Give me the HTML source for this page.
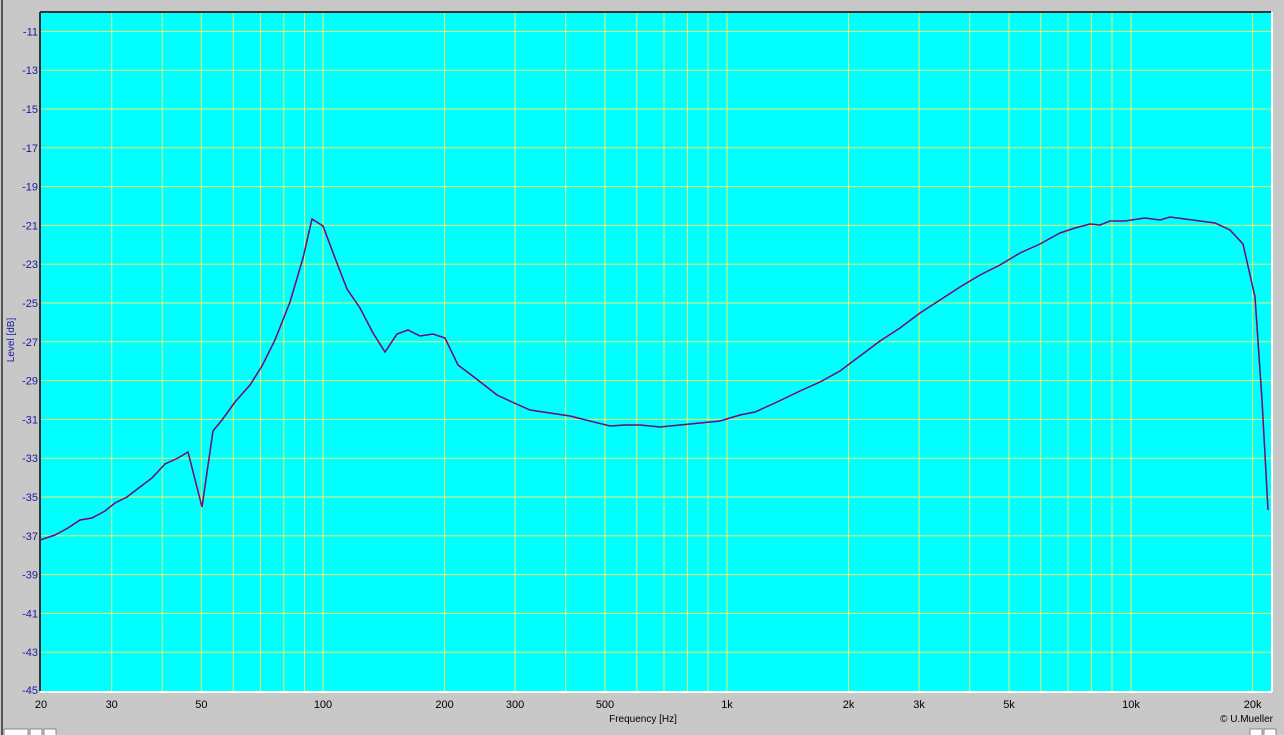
<!DOCTYPE html>
<html><head><meta charset="utf-8"><style>
html,body{margin:0;padding:0;background:#c8c8c8;width:1284px;height:735px;overflow:hidden}
svg text{font-family:"Liberation Sans",Arial,sans-serif}
</style></head><body>
<svg width="1284" height="735" xmlns="http://www.w3.org/2000/svg">
<rect width="1284" height="735" fill="#c8c8c8"/>
<line x1="2" y1="0" x2="2" y2="735" stroke="#555" stroke-width="2"/>
<rect x="40" y="12" width="1231" height="679" fill="#00ffff"/>
<g stroke="#e4f070" stroke-width="1">
<line x1="111.7" y1="12" x2="111.7" y2="691"/><line x1="162.2" y1="12" x2="162.2" y2="691"/>
<line x1="201.4" y1="12" x2="201.4" y2="691"/><line x1="233.3" y1="12" x2="233.3" y2="691"/>
<line x1="260.4" y1="12" x2="260.4" y2="691"/><line x1="283.8" y1="12" x2="283.8" y2="691"/>
<line x1="304.5" y1="12" x2="304.5" y2="691"/><line x1="323" y1="12" x2="323" y2="691"/>
<line x1="444.6" y1="12" x2="444.6" y2="691"/><line x1="515.1" y1="12" x2="515.1" y2="691"/>
<line x1="565.7" y1="12" x2="565.7" y2="691"/><line x1="605" y1="12" x2="605" y2="691"/>
<line x1="636.8" y1="12" x2="636.8" y2="691"/><line x1="664" y1="12" x2="664" y2="691"/>
<line x1="687.4" y1="12" x2="687.4" y2="691"/><line x1="708" y1="12" x2="708" y2="691"/>
<line x1="727" y1="12" x2="727" y2="691"/>
<line x1="848.6" y1="12" x2="848.6" y2="691"/><line x1="919.1" y1="12" x2="919.1" y2="691"/>
<line x1="969.7" y1="12" x2="969.7" y2="691"/><line x1="1009" y1="12" x2="1009" y2="691"/>
<line x1="1040.8" y1="12" x2="1040.8" y2="691"/><line x1="1068" y1="12" x2="1068" y2="691"/>
<line x1="1091.4" y1="12" x2="1091.4" y2="691"/><line x1="1112" y1="12" x2="1112" y2="691"/>
<line x1="1131" y1="12" x2="1131" y2="691"/><line x1="1252.6" y1="12" x2="1252.6" y2="691"/>
<line x1="40" y1="31.4" x2="1271" y2="31.4"/><line x1="40" y1="70.2" x2="1271" y2="70.2"/>
<line x1="40" y1="109" x2="1271" y2="109"/><line x1="40" y1="147.8" x2="1271" y2="147.8"/>
<line x1="40" y1="186.6" x2="1271" y2="186.6"/><line x1="40" y1="225.4" x2="1271" y2="225.4"/>
<line x1="40" y1="264.2" x2="1271" y2="264.2"/><line x1="40" y1="303" x2="1271" y2="303"/>
<line x1="40" y1="341.8" x2="1271" y2="341.8"/><line x1="40" y1="380.6" x2="1271" y2="380.6"/>
<line x1="40" y1="419.4" x2="1271" y2="419.4"/><line x1="40" y1="458.2" x2="1271" y2="458.2"/>
<line x1="40" y1="497" x2="1271" y2="497"/><line x1="40" y1="535.8" x2="1271" y2="535.8"/>
<line x1="40" y1="574.6" x2="1271" y2="574.6"/><line x1="40" y1="613.4" x2="1271" y2="613.4"/>
<line x1="40" y1="652.2" x2="1271" y2="652.2"/>
</g>
<line x1="40" y1="12" x2="1271" y2="12" stroke="#333" stroke-width="2"/>
<line x1="40" y1="12" x2="40" y2="691" stroke="#333" stroke-width="2"/>
<line x1="40" y1="692" x2="1272" y2="692" stroke="#fff" stroke-width="2"/>
<line x1="1272" y1="12" x2="1272" y2="692" stroke="#fff" stroke-width="2"/>
<polyline fill="none" stroke="#1a10d0" stroke-width="1.5" points="40,540 55,535 68,528 80,520 92,518 105,511 115,503 127,497 140,487 152,478 165,464 178,458 188,452 202,507 213,431 222,420 235,402 250,385 262,366 275,340 290,302 303,258 312,219 323,226 335,258 347,289 360,308 373,333 385,352 397,334 408,330 420,336 433,334 445,338 458,365 470,374 483,384 497,395 512,402 530,410 550,413 570,416 590,421 610,426 625,425 640,425 660,427 680,425 700,423 720,421 740,415 755,412 775,403 800,391 820,382 840,371 860,356 880,341 900,328 920,313 940,300 960,287 980,275 1000,265 1020,253 1040,244 1060,233 1075,228 1090,224 1100,225 1110,221 1125,221 1145,218 1160,220 1170,217 1185,219 1200,221 1215,223 1230,230 1243,244 1255,297 1262,400 1268,510"/>
<polyline fill="none" stroke="#c00020" stroke-width="0.8" points="40,540 55,535 68,528 80,520 92,518 105,511 115,503 127,497 140,487 152,478 165,464 178,458 188,452 202,507 213,431 222,420 235,402 250,385 262,366 275,340 290,302 303,258 312,219 323,226 335,258 347,289 360,308 373,333 385,352 397,334 408,330 420,336 433,334 445,338 458,365 470,374 483,384 497,395 512,402 530,410 550,413 570,416 590,421 610,426 625,425 640,425 660,427 680,425 700,423 720,421 740,415 755,412 775,403 800,391 820,382 840,371 860,356 880,341 900,328 920,313 940,300 960,287 980,275 1000,265 1020,253 1040,244 1060,233 1075,228 1090,224 1100,225 1110,221 1125,221 1145,218 1160,220 1170,217 1185,219 1200,221 1215,223 1230,230 1243,244 1255,297 1262,400 1268,510"/>
<g fill="#1a1aa0" font-size="11" text-anchor="end">
<text x="38" y="35.4">-11</text><text x="38" y="74.2">-13</text><text x="38" y="113">-15</text>
<text x="38" y="151.8">-17</text><text x="38" y="190.6">-19</text><text x="38" y="229.4">-21</text>
<text x="38" y="268.2">-23</text><text x="38" y="307">-25</text><text x="38" y="345.8">-27</text>
<text x="38" y="384.6">-29</text><text x="38" y="423.4">-31</text><text x="38" y="462.2">-33</text>
<text x="38" y="501">-35</text><text x="38" y="539.8">-37</text><text x="38" y="578.6">-39</text>
<text x="38" y="617.4">-41</text><text x="38" y="656.2">-43</text><text x="38" y="694">-45</text>
</g>
<text x="14" y="340" fill="#1a1aa0" font-size="10" text-anchor="middle" transform="rotate(-90 14 340)">Level [dB]</text>
<g fill="#000" font-size="11" text-anchor="middle">
<text x="41" y="708">20</text><text x="111.7" y="708">30</text><text x="201.4" y="708">50</text>
<text x="323" y="708">100</text><text x="444.6" y="708">200</text><text x="515.1" y="708">300</text>
<text x="605" y="708">500</text><text x="727" y="708">1k</text><text x="848.6" y="708">2k</text>
<text x="919.1" y="708">3k</text><text x="1009" y="708">5k</text><text x="1131" y="708">10k</text>
<text x="1252.6" y="708">20k</text>
<text x="643" y="722" font-size="10">Frequency [Hz]</text>
</g>
<text x="1273" y="722" fill="#000" font-size="10" text-anchor="end">© U.Mueller</text>
<rect x="4" y="729" width="24" height="8" fill="#fff" stroke="#888"/>
<rect x="30" y="729" width="12" height="8" fill="#fff" stroke="#888"/>
<rect x="44" y="729" width="12" height="8" fill="#fff" stroke="#888"/>
<rect x="1250" y="729" width="12" height="8" fill="#fff" stroke="#888"/>
<rect x="1264" y="729" width="12" height="8" fill="#fff" stroke="#888"/>
</svg>
</body></html>
